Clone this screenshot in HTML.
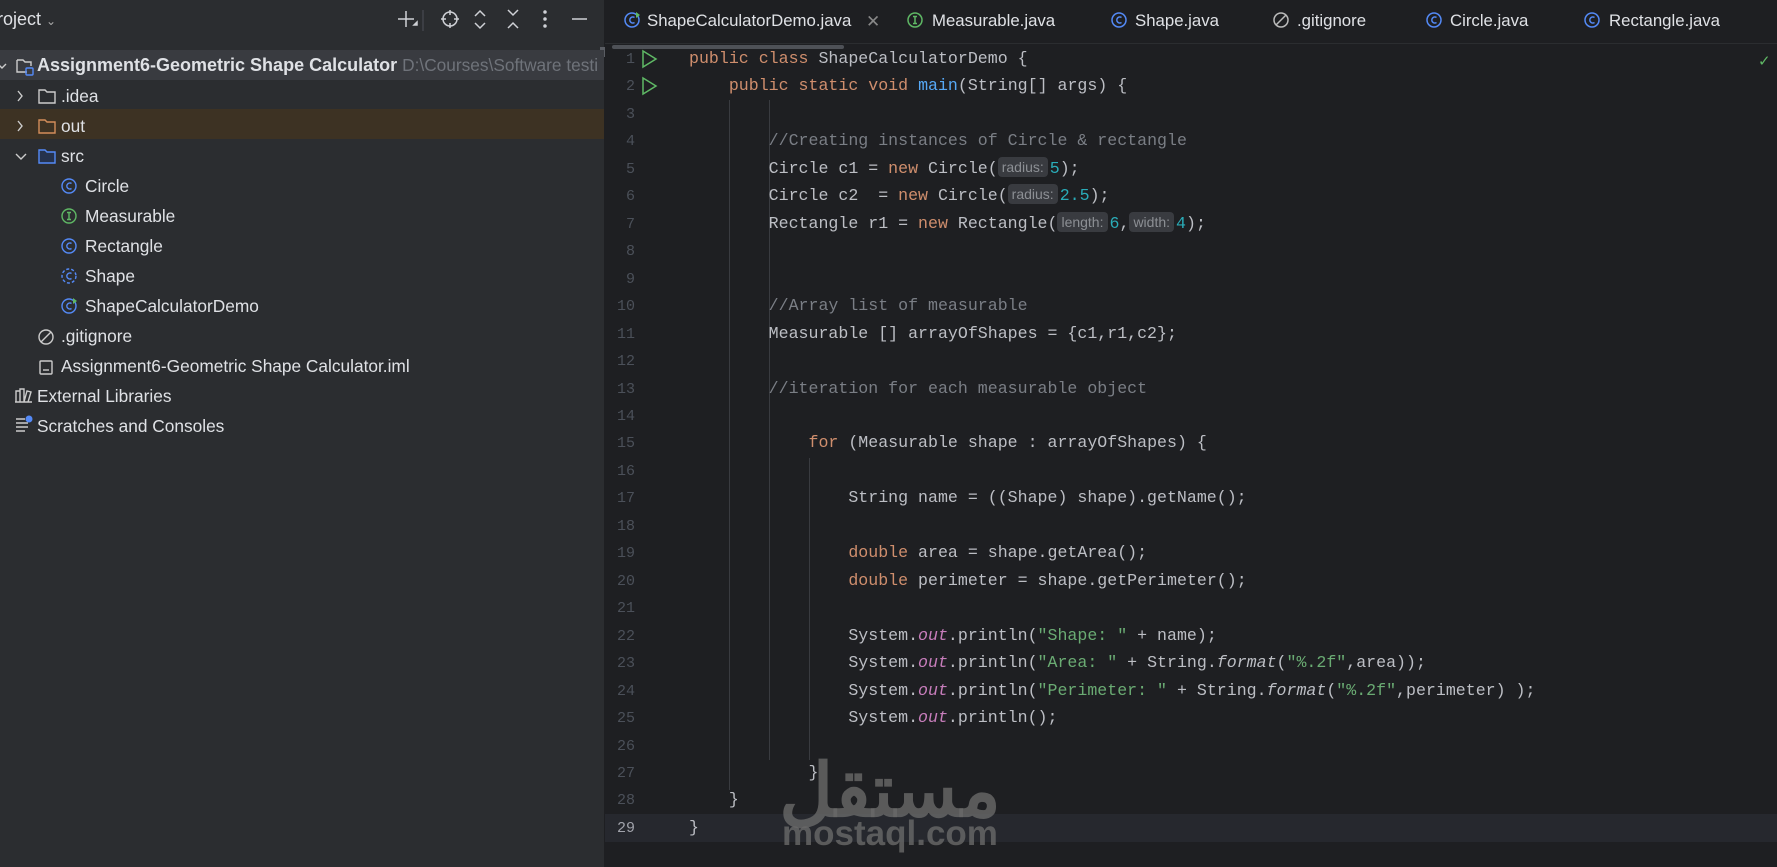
<!DOCTYPE html>
<html><head><meta charset="utf-8"><style>
*{margin:0;padding:0;box-sizing:border-box}
body{width:1777px;height:867px;overflow:hidden;background:#1e1f22;font-family:"Liberation Sans",sans-serif;position:relative}
#side{position:absolute;left:0;top:0;width:605px;height:867px;background:#2b2d30;border-right:1px solid #1e1f22}
.t{position:absolute;white-space:nowrap;color:#dfe1e5;font-size:17.3px}
.row{position:absolute;left:0;width:604px;height:30px}
.ic{position:absolute}
#ed{position:absolute;left:605px;top:0;right:0;bottom:0;background:#1e1f22}
.tab{position:absolute;top:11px;font-size:16.8px;color:#dfe1e5;white-space:nowrap}
.ln{position:absolute;left:605px;width:30px;text-align:right;font-family:"Liberation Mono",monospace;font-size:15px;color:#4b5059}
.cl{position:absolute;left:689px;font-family:"Liberation Mono",monospace;font-size:16.6px;color:#bcbec4;white-space:pre;line-height:27px}
.k{color:#cf8e6d}.c{color:#7a7e85}.s{color:#6aab73}.n{color:#2aacb8}.m{color:#56a8f5}.o{color:#c77dbb;font-style:italic}
.h{display:inline-block;background:#393b40;color:#8c8f94;font-family:"Liberation Sans",sans-serif;font-size:14px;border-radius:4px;padding:0 4px;line-height:20px;margin-right:2px;vertical-align:1px}
.g{position:absolute;width:1px;background:#393b40}
</style></head><body>
<div id="side">
 <div class="t" style="left:-3px;top:9px;font-size:18px">roject <span style="font-size:12px;color:#aaa">&#8964;</span></div>
 <svg class="ic" style="left:396px;top:7px" width="200" height="26" stroke="#cfd1d6" fill="none" stroke-width="1.5">
  <path d="M10 4v16M2 12h16"/><path d="M18 18l3 0 0-3z" fill="#cfd1d6"/>
  <line x1="27" y1="3" x2="27" y2="24" stroke="#43454a"/>
  <circle cx="54" cy="12" r="7"/><path d="M54 3v5M54 16v5M45 12h5M58 12h5"/>
  <path d="M79 9l5-5 5 5M79 16l5 5 5-5"/>
  <path d="M112 3l5 5 5-5M112 21l5-5 5 5"/>
  <circle cx="149" cy="5" r="1" fill="#cfd1d6"/><circle cx="149" cy="12" r="1" fill="#cfd1d6"/><circle cx="149" cy="19" r="1" fill="#cfd1d6"/>
  <path d="M176 12h15"/>
 </svg>
 <div style="position:absolute;left:600px;top:47px;width:5px;height:10px;background:#5a5d63"></div>
 <div class="row" style="top:50px;background:#393b40"></div>
 <div class="row" style="top:109px;background:#3d3223"></div>
 <svg class="ic" style="left:0;top:2px" width="100" height="440" fill="none" stroke-width="1.4">
  <path d="M-2 62l4 4 4-4" stroke="#ccc"/>
  <path d="M17 58v12h10M17 58h6l2 2h6v4" stroke="#ccc"/><rect x="26" y="66" width="7" height="7" rx="1" stroke="#548af7"/>
  <path d="M18 89l4 5-4 5" stroke="#ccc"/><path d="M39 88h6l2 2h8v11H39z" stroke="#ccc"/>
  <path d="M18 119l4 5-4 5" stroke="#ccc"/><path d="M39 118h6l2 2h8v11H39z" stroke="#d38d5a"/>
  <path d="M16 152l5 5 5-5" stroke="#ccc"/><path d="M39 148h6l2 2h8v11H39z" stroke="#548af7" fill="#25324d"/>
 </svg>
 <div class="t" style="left:37px;top:55px;font-weight:bold;font-size:18px">Assignment6-Geometric Shape Calculator <span style="font-weight:normal;color:#6f737a;font-size:17.3px">D:\Courses\Software testi</span></div>
 <div class="t" style="left:61px;top:86px">.idea</div>
 <div class="t" style="left:61px;top:116px">out</div>
 <div class="t" style="left:61px;top:146px">src</div>
 <svg class="ic" style="left:60px;top:174px" width="22" height="150" fill="none" stroke-width="1.4">
  <circle cx="9" cy="12" r="7" stroke="#548af7"/><path d="M11.5 9.5a3 3 0 1 0 0 5" stroke="#548af7"/>
  <circle cx="9" cy="42" r="7" stroke="#5fb865"/><path d="M7 38.5h4M7 45.5h4M9 38.5v7" stroke="#5fb865"/>
  <circle cx="9" cy="72" r="7" stroke="#548af7"/><path d="M11.5 69.5a3 3 0 1 0 0 5" stroke="#548af7"/>
  <circle cx="9" cy="102" r="7" stroke="#548af7" stroke-dasharray="3 2"/><path d="M11.5 99.5a3 3 0 1 0 0 5" stroke="#548af7"/>
  <circle cx="9" cy="132" r="7" stroke="#548af7"/><path d="M11.5 129.5a3 3 0 1 0 0 5" stroke="#548af7"/><path d="M13 124l4 3-4 3z" fill="#5fb865" stroke="none"/>
 </svg>
 <div class="t" style="left:85px;top:176px">Circle</div>
 <div class="t" style="left:85px;top:206px">Measurable</div>
 <div class="t" style="left:85px;top:236px">Rectangle</div>
 <div class="t" style="left:85px;top:266px">Shape</div>
 <div class="t" style="left:85px;top:296px">ShapeCalculatorDemo</div>
 <svg class="ic" style="left:37px;top:325px" width="22" height="110" fill="none" stroke="#ccc" stroke-width="1.4">
  <circle cx="9" cy="12" r="7"/><path d="M4 17l10-10"/>
  <rect x="3" y="36" width="12" height="13" rx="1"/><path d="M6 45h6"/>
 </svg>
 <div class="t" style="left:61px;top:326px">.gitignore</div>
 <div class="t" style="left:61px;top:356px">Assignment6-Geometric Shape Calculator.iml</div>
 <svg class="ic" style="left:14px;top:385px" width="22" height="60" fill="none" stroke="#ccc" stroke-width="1.4">
  <path d="M2 17V6h4v11M6 17V4h4v13M10 17l3-11 4 1-3 10M1 17h17"/>
  <path d="M2 34h9M2 38h12M2 42h12M2 46h9"/><circle cx="15" cy="34" r="3.5" fill="#548af7" stroke="none"/>
 </svg>
 <div class="t" style="left:37px;top:386px">External Libraries</div>
 <div class="t" style="left:37px;top:416px">Scratches and Consoles</div>
</div>
<div id="ed"></div>
<div style="position:absolute;left:605px;top:43px;right:0;height:1px;background:#2b2d30"></div>
<div style="position:absolute;left:612px;top:45px;width:232px;height:4px;border-radius:2px;background:#4e5157"></div>
<svg class="ic" style="left:622px;top:10px" width="1000" height="22" fill="none" stroke-width="1.5">
 <circle cx="10" cy="10" r="7" stroke="#548af7"/><path d="M12.5 7.5a3 3 0 1 0 0 5" stroke="#548af7"/><path d="M14 2l4 3-4 3z" fill="#5fb865" stroke="none"/>
 <circle cx="293" cy="10" r="7" stroke="#5fb865"/><path d="M291 6.5h4M291 13.5h4M293 6.5v7" stroke="#5fb865"/>
 <circle cx="497" cy="10" r="7" stroke="#548af7"/><path d="M499.5 7.5a3 3 0 1 0 0 5" stroke="#548af7"/>
 <circle cx="659" cy="10" r="7" stroke="#bbb"/><path d="M654 15l10-10" stroke="#bbb"/>
 <circle cx="812" cy="10" r="7" stroke="#548af7"/><path d="M814.5 7.5a3 3 0 1 0 0 5" stroke="#548af7"/>
 <circle cx="970" cy="10" r="7" stroke="#548af7"/><path d="M972.5 7.5a3 3 0 1 0 0 5" stroke="#548af7"/>
</svg>
<div class="tab" style="left:647px">ShapeCalculatorDemo.java</div>
<div class="tab" style="left:866px;color:#888">✕</div>
<div class="tab" style="left:932px">Measurable.java</div>
<div class="tab" style="left:1135px">Shape.java</div>
<div class="tab" style="left:1297px">.gitignore</div>
<div class="tab" style="left:1450px">Circle.java</div>
<div class="tab" style="left:1609px">Rectangle.java</div>
<div style="position:absolute;left:1758px;top:52px;color:#5fb865;font-size:15px">✓</div>
<div style="position:absolute;left:605px;top:814px;right:0;height:28px;background:#26282e"></div>
<svg class="ic" style="left:641px;top:49px" width="20" height="50" fill="none" stroke="#5fb865" stroke-width="1.5"><path d="M2 2l13 8-13 8z"/><path d="M2 29l13 8-13 8z"/></svg>
<div class="g" style="left:729px;top:100px;height:690px"></div>
<div class="g" style="left:769px;top:100px;height:660px"></div>
<div class="g" style="left:809px;top:458px;height:302px"></div>
<div id="nums"></div>
<div id="code"></div>
<script>
var L=[
'<span class="k">public class</span> ShapeCalculatorDemo {',
'    <span class="k">public static void</span> <span class="m">main</span>(String[] args) {',
'',
'        <span class="c">//Creating instances of Circle &amp; rectangle</span>',
'        Circle c1 = <span class="k">new</span> Circle(<span class="h">radius:</span><span class="n">5</span>);',
'        Circle c2  = <span class="k">new</span> Circle(<span class="h">radius:</span><span class="n">2.5</span>);',
'        Rectangle r1 = <span class="k">new</span> Rectangle(<span class="h">length:</span><span class="n">6</span>,<span class="h">width:</span><span class="n">4</span>);',
'','',
'        <span class="c">//Array list of measurable</span>',
'        Measurable [] arrayOfShapes = {c1,r1,c2};',
'',
'        <span class="c">//iteration for each measurable object</span>',
'',
'            <span class="k">for</span> (Measurable shape : arrayOfShapes) {',
'',
'                String name = ((Shape) shape).getName();',
'',
'                <span class="k">double</span> area = shape.getArea();',
'                <span class="k">double</span> perimeter = shape.getPerimeter();',
'',
'                System.<span class="o">out</span>.println(<span class="s">"Shape: "</span> + name);',
'                System.<span class="o">out</span>.println(<span class="s">"Area: "</span> + String.<span style="font-style:italic">format</span>(<span class="s">"%.2f"</span>,area));',
'                System.<span class="o">out</span>.println(<span class="s">"Perimeter: "</span> + String.<span style="font-style:italic">format</span>(<span class="s">"%.2f"</span>,perimeter) );',
'                System.<span class="o">out</span>.println();',
'',
'            }',
'    }',
'}'];
var h='',n='';
for(var i=0;i<L.length;i++){var t=45+i*27.46;
h+='<div class="cl" style="top:'+t+'px">'+L[i]+'</div>';
n+='<div class="ln" style="top:'+(t+6)+'px;'+(i==28?'color:#a1a3ab':'')+'">'+(i+1)+'</div>';}
document.getElementById('code').innerHTML=h;document.getElementById('nums').innerHTML=n;
</script>
<div style="position:absolute;left:770px;top:745px;width:240px;text-align:center;color:rgba(105,105,105,0.8);font-family:'Noto Sans CJK SC',sans-serif;font-weight:bold;font-size:74px;line-height:80px">مستقل</div>
<div style="position:absolute;left:780px;top:814px;width:220px;text-align:center;color:rgba(105,105,105,0.8);font-weight:bold;font-size:35px;line-height:40px">mostaql.com</div>
</body></html>
